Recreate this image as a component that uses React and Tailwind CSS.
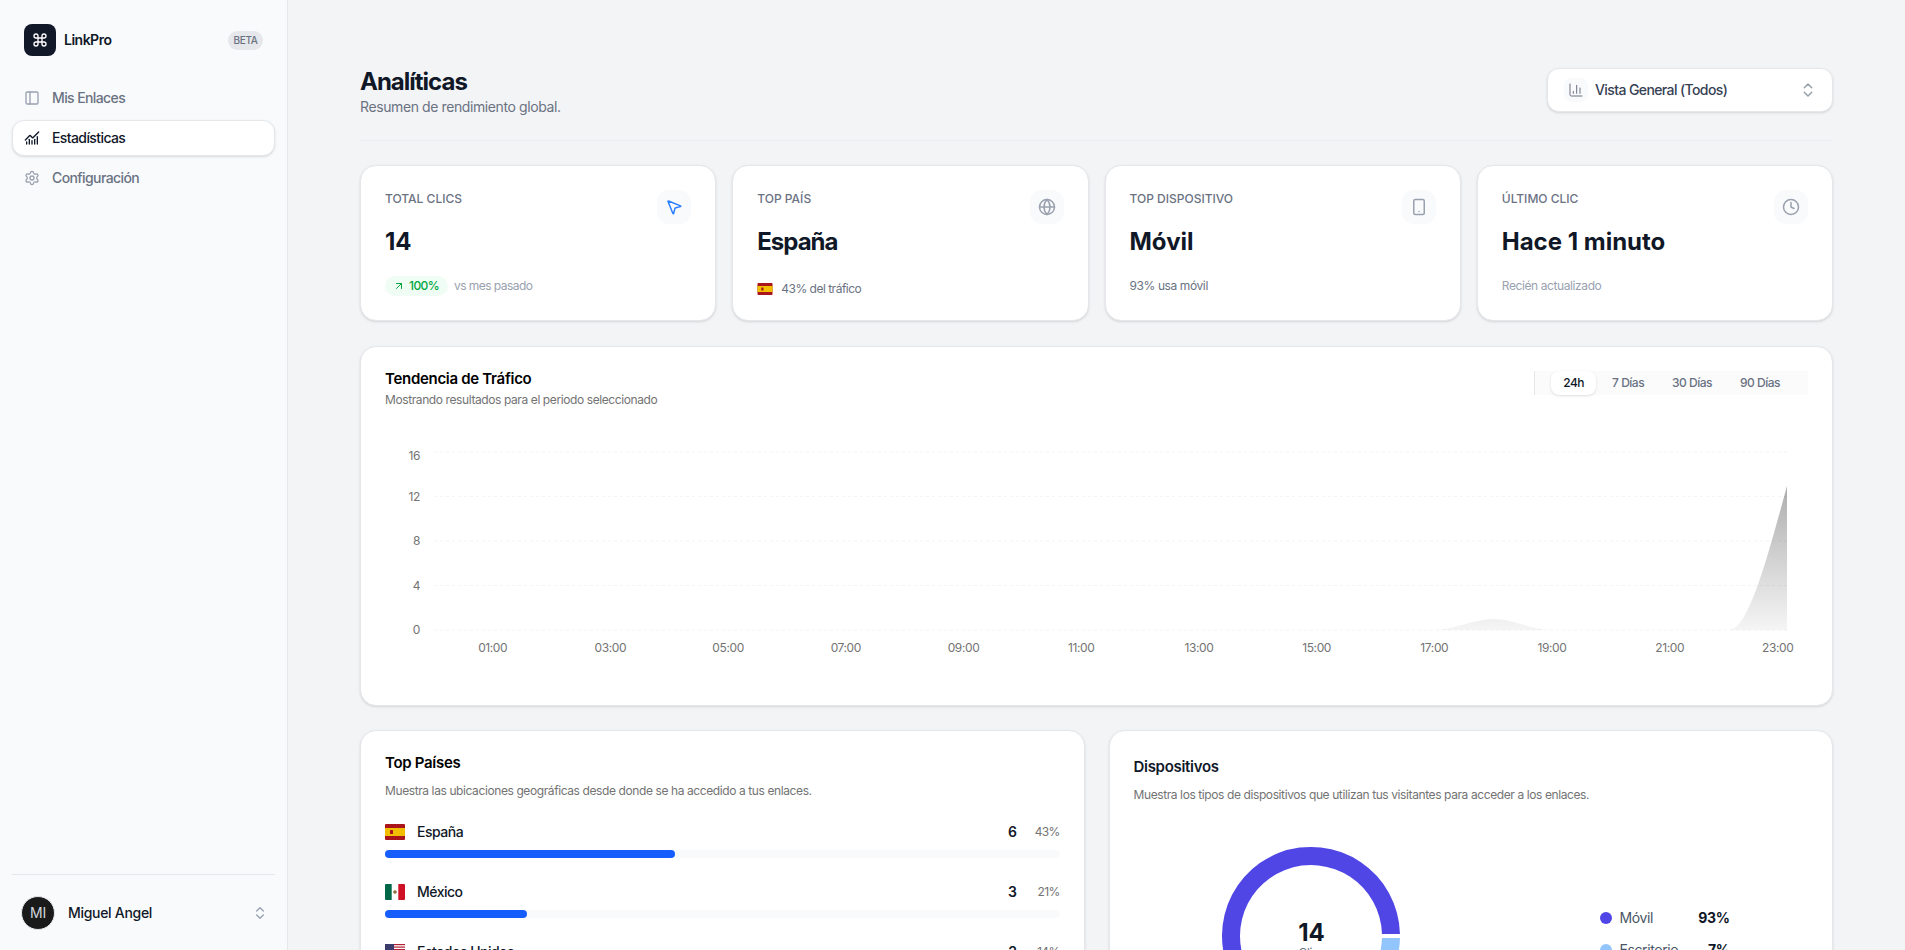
import {
  ArrowUpRight, ChartColumn, ChartNoAxesCombined, ChevronsUpDown, Clock, Command,
  Globe, MousePointer2, PanelLeft, Settings, Smartphone,
} from 'lucide-react'

const NAV = [
  { label: 'Mis Enlaces', icon: PanelLeft },
  { label: 'Estadísticas', icon: ChartNoAxesCombined, active: true },
  { label: 'Configuración', icon: Settings },
]

const GRID = [
  { label: '16', y: 36, text: 44 },
  { label: '12', y: 80.5, text: 85 },
  { label: '8', y: 125, text: 129 },
  { label: '4', y: 169.5, text: 174 },
  { label: '0', y: 214, text: 218 },
]

const HOURS = ['01:00', '03:00', '05:00', '07:00', '09:00', '11:00', '13:00', '15:00', '17:00', '19:00', '21:00']

const COUNTRIES = [
  { name: 'España', count: 6, pct: 43, flag: 'es' },
  { name: 'México', count: 3, pct: 21, flag: 'mx' },
  { name: 'Estados Unidos', count: 2, pct: 14, flag: 'us' },
]

function Flag({ code, className }) {
  if (code === 'es') {
    return (
      <svg viewBox="0 0 20 16" className={className}>
        <rect width="20" height="16" rx="1" fill="#aa151b" />
        <rect y="4" width="20" height="8" fill="#f1bf00" />
        <rect x="5" y="6" width="3" height="4" rx="0.5" fill="#ad1519" />
      </svg>
    )
  }
  if (code === 'mx') {
    return (
      <svg viewBox="0 0 20 16" className={className}>
        <rect width="20" height="16" rx="1" fill="#ffffff" />
        <path d="M1 0h5.7v16H1a1 1 0 0 1-1-1V1a1 1 0 0 1 1-1z" fill="#006847" />
        <path d="M13.3 0H19a1 1 0 0 1 1 1v14a1 1 0 0 1-1 1h-5.7z" fill="#ce1126" />
        <circle cx="10" cy="8" r="1.8" fill="#8c6a3f" />
      </svg>
    )
  }
  return (
    <svg viewBox="0 0 20 16" className={className}>
      <rect width="20" height="16" rx="1" fill="#ffffff" />
      <rect width="20" height="1.2" fill="#b22234" />
      <rect y="2.5" width="20" height="1.2" fill="#b22234" />
      <rect y="5" width="20" height="1.2" fill="#b22234" />
      <rect y="7.5" width="20" height="1.2" fill="#b22234" />
      <rect y="10" width="20" height="1.2" fill="#b22234" />
      <rect y="12.5" width="20" height="1.2" fill="#b22234" />
      <rect y="15" width="20" height="1" fill="#b22234" />
      <rect width="9" height="8.6" fill="#3c3b6e" />
    </svg>
  )
}

function StatCard({ label, value, icon: Icon, iconClass, valueClass = 'tracking-normal', children }) {
  return (
    <div className="bg-white rounded-2xl border border-gray-200 shadow-sm px-6 pt-6 pb-[23px]">
      <div className="flex items-start justify-between mb-[2px]">
        <p className="mt-px text-xs font-medium uppercase tracking-normal text-gray-500">{label}</p>
        <div className="w-[34px] h-[34px] rounded-xl bg-gray-50 flex items-center justify-center">
          <Icon size={18} className={iconClass} />
        </div>
      </div>
      <p className={`text-2xl font-bold text-gray-900 ${valueClass}`}>{value}</p>
      {children}
    </div>
  )
}

function TrafficChart() {
  return (
    <svg width="1422" height="270" className="mt-2 block">
      <defs>
        <linearGradient id="trafficFill" x1="0" y1="0" x2="0" y2="1">
          <stop offset="0%" stopColor="#000000" stopOpacity="0.32" />
          <stop offset="100%" stopColor="#000000" stopOpacity="0.04" />
        </linearGradient>
      </defs>
      {GRID.map(g => (
        <g key={g.label}>
          <line x1="49" x2="1402" y1={g.y} y2={g.y} stroke="#f3f4f6" strokeDasharray="3 3" />
          <text x="35" y={g.text} textAnchor="end" fontSize="12" fill="#737373">{g.label}</text>
        </g>
      ))}
      <path
        d="M1049 214 C1068.6 214 1088.4 203 1108 203 C1127.6 203 1147.4 214 1167 214 Z M1344 214 C1363.6 214 1382.4 141.7 1402 70 L1402 214 Z"
        fill="url(#trafficFill)"
      />
      {HOURS.map((h, i) => (
        <text key={h} x={107.7 + i * 117.7} y="236" textAnchor="middle" fontSize="12" fill="#737373">{h}</text>
      ))}
      <text x="1392.7" y="236" textAnchor="middle" fontSize="12" fill="#737373">23:00</text>
    </svg>
  )
}

function Donut() {
  return (
    <div className="relative w-[180px] h-[180px] ml-[87px] mt-[43px] shrink-0">
      <svg width="180" height="180" viewBox="0 0 180 180">
        <path d="M178.98 88 A89 89 0 1 0 167.8 133.1 L152.1 124.4 A71 71 0 1 1 160.97 88 Z" fill="#4f46e5" />
        <path d="M178.98 92 A89 89 0 0 1 170 129 L153.8 121.1 A71 71 0 0 0 160.97 92 Z" fill="#93c5fd" />
      </svg>
      <div className="absolute inset-0 pt-[6px] pl-[2px] flex flex-col items-center justify-center">
        <p className="text-2xl font-bold leading-8 tracking-normal text-gray-900">14</p>
        <p className="text-xs text-gray-500 mt-[-4px]">Clics</p>
      </div>
    </div>
  )
}

export default function App() {
  return (
    <div className="flex h-screen overflow-hidden bg-[#f3f4f6] font-[Inter,sans-serif] tracking-[-0.4px]">
      <aside className="w-72 shrink-0 h-full flex flex-col bg-[#f9fafc] border-r border-gray-200 px-3">
        <div className="flex items-center pl-3 pr-3 pt-6">
          <div className="w-8 h-8 rounded-lg bg-[#111827] flex items-center justify-center">
            <Command size={16} className="text-white" />
          </div>
          <span className="ml-2 text-sm font-semibold tracking-[-0.5px] text-gray-900">LinkPro</span>
          <span className="ml-auto w-[35px] h-[19px] flex items-center justify-center text-[10px] font-medium text-gray-500 bg-gray-200 rounded-full">BETA</span>
        </div>
        <nav className="mt-6 flex flex-col gap-1">
          {NAV.map(item => (
            <div
              key={item.label}
              className={item.active
                ? 'h-9 flex items-center gap-3 pl-[11px] pr-3 rounded-xl bg-white border border-gray-200 shadow-sm text-sm font-medium tracking-[-0.6px] text-gray-900'
                : 'h-9 flex items-center gap-3 pl-[11px] pr-3 rounded-xl border border-transparent text-sm font-medium tracking-[-0.6px] text-gray-500'}
            >
              <item.icon size={16} className={item.active ? 'text-gray-900' : 'text-gray-400'} />
              {item.label}
            </div>
          ))}
        </nav>
        <div className="mt-auto border-t border-gray-200 h-[76px] flex items-center px-[9px] gap-[13px]">
          <div className="w-[34px] h-[34px] rounded-full bg-[#1a1a1a] border border-gray-200 flex items-center justify-center text-sm tracking-[-0.2px] text-gray-300">MI</div>
          <span className="text-sm font-medium tracking-[-0.3px] text-gray-900">Miguel Angel</span>
          <ChevronsUpDown size={16} className="ml-auto mr-[-2px] text-gray-400" />
        </div>
      </aside>

      <main className="flex-1 min-w-0 h-full overflow-hidden px-[72px] pt-[66px]">
        <header className="flex items-center justify-between h-[75px] pb-6 border-b border-gray-200/60">
          <div>
            <h1 className="text-2xl font-bold leading-[32px] tracking-[-1px] text-gray-900">Analíticas</h1>
            <p className="text-sm leading-[20px] text-gray-500 mt-[-1px]">Resumen de rendimiento global.</p>
          </div>
          <div className="w-[286px] h-11 mt-[-2px] flex items-center bg-white rounded-xl border border-gray-200 shadow-sm pl-4 pr-[15px]">
            <div className="w-6 h-6 rounded-lg bg-gray-50 flex items-center justify-center">
              <ChartColumn size={16} strokeWidth={1.5} className="text-gray-500" />
            </div>
            <span className="ml-[7px] text-sm font-medium tracking-[-0.6px] text-gray-700">Vista General (Todos)</span>
            <ChevronsUpDown size={18} className="ml-auto text-gray-400" />
          </div>
        </header>

        <div className="grid grid-cols-4 gap-4 mt-6">
          <StatCard label="Total Clics" value="14" icon={MousePointer2} iconClass="text-blue-500">
            <div className="flex items-center gap-[6px] mt-[18px] h-5">
              <span className="h-5 flex items-center gap-1 pl-2 pr-[9px] rounded-full bg-green-50 text-xs font-medium tracking-[-0.6px] text-green-600">
                <ArrowUpRight size={12} />100%
              </span>
              <span className="text-xs tracking-[-0.55px] text-gray-400">vs mes pasado</span>
            </div>
          </StatCard>
          <StatCard label="Top País" value="España" valueClass="tracking-[-1px]" icon={Globe} iconClass="text-gray-400">
            <div className="flex items-center gap-2 mt-[23px]">
              <Flag code="es" className="w-4 h-3" />
              <span className="text-xs tracking-[-0.5px] text-gray-500">43% del tráfico</span>
            </div>
          </StatCard>
          <StatCard label="Top Dispositivo" value="Móvil" icon={Smartphone} iconClass="text-gray-400">
            <p className="text-xs text-gray-500 mt-5">93% usa móvil</p>
          </StatCard>
          <StatCard label="Último Clic" value="Hace 1 minuto" icon={Clock} iconClass="text-gray-400">
            <p className="text-xs text-gray-400 mt-5">Recién actualizado</p>
          </StatCard>
        </div>

        <section className="mt-[25px] bg-white rounded-2xl border border-gray-200 shadow-sm px-6 pt-[21px] pb-[19px]">
          <div className="flex items-start justify-between">
            <div>
              <h2 className="text-[15px] font-semibold leading-[22px] tracking-[-0.3px] text-black">Tendencia de Tráfico</h2>
              <p className="mt-[2px] text-xs text-neutral-500">Mostrando resultados para el periodo seleccionado</p>
            </div>
            <div className="flex items-center gap-1 h-6 mt-[3px] px-4 border-l border-gray-200 bg-gray-50/70 text-xs font-medium tracking-[-0.5px] text-gray-500">
              <span className="h-6 flex items-center px-3 rounded-lg bg-white shadow-sm text-gray-900">24h</span>
              <span className="px-3">7 Días</span>
              <span className="px-3">30 Días</span>
              <span className="px-3">90 Días</span>
            </div>
          </div>
          <TrafficChart />
        </section>

        <div className="grid grid-cols-2 gap-6 mt-6">
          <section className="bg-white rounded-2xl border border-gray-200 shadow-sm px-6 pt-5 h-[500px]">
            <h2 className="text-[15px] font-semibold leading-6 tracking-[-0.3px] text-black">Top Países</h2>
            <p className="text-xs text-neutral-500 mt-2">Muestra las ubicaciones geográficas desde donde se ha accedido a tus enlaces.</p>
            <div className="flex flex-col gap-6 mt-[23px]">
              {COUNTRIES.map(c => (
                <div key={c.name}>
                  <div className="flex items-center h-5 mb-2">
                    <Flag code={c.flag} className="w-5 h-4" />
                    <span className="ml-3 text-sm font-medium tracking-[-0.5px] text-gray-900">{c.name}</span>
                    <span className="ml-auto text-sm font-semibold text-gray-900">{c.count}</span>
                    <span className="ml-4 w-[27px] text-right text-xs tracking-[-0.7px] text-neutral-500">{c.pct}%</span>
                  </div>
                  <div className="h-2 rounded-full bg-gray-50">
                    <div className="h-2 rounded-full bg-[#155dfc]" style={{ width: `${c.pct}%` }} />
                  </div>
                </div>
              ))}
            </div>
          </section>

          <section className="bg-white rounded-2xl border border-gray-200 shadow-sm px-6 pt-6 h-[500px]">
            <h2 className="text-[15px] font-semibold leading-6 tracking-[-0.3px] text-gray-900">Dispositivos</h2>
            <p className="text-xs text-neutral-500 mt-2">Muestra los tipos de dispositivos que utilizan tus visitantes para acceder a los enlaces.</p>
            <div className="flex items-start">
              <Donut />
              <div className="w-[130px] ml-[199px] mt-[105px] flex flex-col gap-3">
                <div className="flex items-center justify-between h-5">
                  <span className="flex items-center gap-2 text-sm text-gray-600">
                    <span className="w-3 h-3 rounded-full bg-[#4f46e5]" />Móvil
                  </span>
                  <span className="text-sm font-bold text-gray-900">93%</span>
                </div>
                <div className="flex items-center justify-between h-5">
                  <span className="flex items-center gap-2 text-sm text-gray-600">
                    <span className="w-3 h-3 rounded-full bg-[#93c5fd]" />Escritorio
                  </span>
                  <span className="text-sm font-bold text-gray-900">7%</span>
                </div>
              </div>
            </div>
          </section>
        </div>
      </main>
    </div>
  )
}
